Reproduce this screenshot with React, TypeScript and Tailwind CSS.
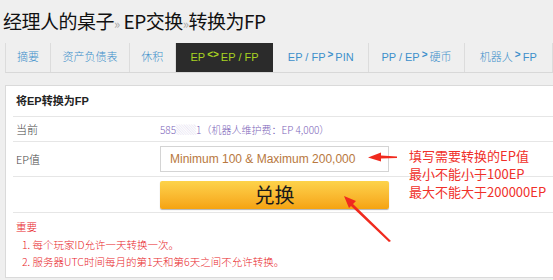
import React from 'react';

const tabs = [
  { label: '摘要', w: 46 },
  { label: '资产负债表', w: 80 },
  { label: '休积', w: 47 },
  { label: 'EP <> EP / FP', w: 99, active: true },
  { label: 'EP / FP > PIN', w: 98 },
  { label: 'PP / EP >硬币', w: 97 },
  { label: '机器人> FP', w: 90 },
];

const cjk = { fontFamily: '"Noto Sans CJK SC", sans-serif' };

const TabLabel = ({ label }: { label: string }) => {
  const parts = label.split(/(<>|>)/);
  return (
    <>
      {parts.map((p, i) =>
        p === '<>' || p === '>' ? (
          <span key={i} className="relative -top-[3px] mx-[2px] text-[10px] font-bold">
            {p}
          </span>
        ) : (
          <span key={i}>{p}</span>
        )
      )}
    </>
  );
};

export default function App() {
  return (
    <div
      className="relative w-[553px] h-[280px] overflow-hidden bg-[#efefef]"
      style={{ fontFamily: '"Liberation Sans", "Noto Sans CJK SC", sans-serif' }}
    >
      <h1 className="h-[43px] pl-[3px] pt-[7px] text-[19px] leading-[28px] text-[#111] tracking-[-0.5px]" style={cjk}>
        经理人的桌子<span className="text-[#aaa] text-[13px]">»</span> EP交换
        <span className="text-[#aaa] text-[13px]">»</span>转换为FP
      </h1>

      <div className="flex h-[30px] ml-[5px] border-b border-[#d8d8d8] border-l border-l-[#dcdcdc]">
        {tabs.map((t) => (
          <div
            key={t.label}
            style={{ width: t.w }}
            className={
              t.active
                ? 'flex items-center justify-center whitespace-nowrap bg-[#2b2b2b] text-[#a8d321] text-[11px] font-light'
                : 'flex items-center justify-center whitespace-nowrap border-r border-[#dcdcdc] text-[#3d8fcb] text-[11px] font-light'
            }
          >
            <TabLabel label={t.label} />
          </div>
        ))}
      </div>

      <div className="mt-[12px] ml-[5px] w-[560px] h-[193px] bg-white border border-[#dadada]">
        <div className="ml-[7px]">
          <div className="h-[31px] flex items-center pl-[3px] border-b border-[#e6e6e6] text-[11px] font-bold text-[#222]">
            将EP转换为FP
          </div>
          <div className="h-[25px] flex items-center border-b border-[#e6e6e6] text-[11px] font-light" style={cjk}>
            <div className="w-[147px] pl-[3px] text-[#444]">当前</div>
            <div className="text-[#7a62b8] text-[10px]">
              585<span className="text-[#d8d2ec]">▒▒</span>1（机器人维护费：EP 4,000）
            </div>
          </div>
          <div className="h-[35px] flex items-center border-b border-[#e6e6e6] text-[11px] font-light">
            <div className="w-[147px] pl-[3px] text-[#444]" style={cjk}>EP值</div>
            <div className="w-[229px] h-[26px] flex items-center pl-[9px] border border-[#d4d4d4] text-[12px] text-[#b87840] whitespace-nowrap">
              Minimum 100 &amp; Maximum 200,000
            </div>
          </div>
          <div className="h-[36px] flex items-center pl-[147px] border-b border-[#e6e6e6]">
            <button
              className="w-[229px] h-[28px] rounded-[2px] bg-gradient-to-b from-[#fdd34a] to-[#f5a30e] text-[20px] leading-[28px] text-[#1a1a1a] shadow-[0_1px_1px_rgba(0,0,0,0.3)]"
              style={cjk}
            >
              兑换
            </button>
          </div>
          <div className="pt-[5px] pl-[3px] text-[10.5px] font-light text-[#e8262a] leading-[17px]" style={cjk}>
            <div>重要</div>
            <ol className="pl-[6px] mt-[1px]">
              <li>1. 每个玩家ID允许一天转换一次。</li>
              <li>2. 服务器UTC时间每月的第1天和第6天之间不允许转换。</li>
            </ol>
          </div>
        </div>
      </div>

      <div
        className="absolute left-[409px] top-[147px] whitespace-nowrap text-[13px] leading-[18px] text-[#f0302a]"
        style={cjk}
      >
        <div>填写需要转换的EP值</div>
        <div>最小不能小于100EP</div>
        <div>最大不能大于200000EP</div>
      </div>

      <svg className="absolute left-0 top-0" width="553" height="280" viewBox="0 0 553 280">
        <path d="M397 156.5 L381 155.5 L381 152.5 L368 157.5 L381 161.5 L381 158.5 L397 158 Z" fill="#f02a1e" />
        <path d="M391 241 L353 204 L356 201 L344 196 L349 208 L351 206 L389 242 Z" fill="#f02a1e" />
      </svg>
    </div>
  );
}
